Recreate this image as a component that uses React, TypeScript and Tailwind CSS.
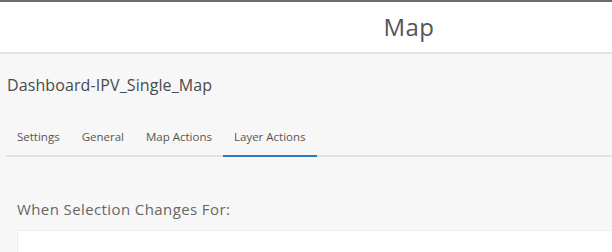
const tabs = ['Settings', 'General', 'Map Actions', 'Layer Actions'];

export default function App() {
  const active = 'Layer Actions';
  return (
    <div className="w-[612px] h-[252px] overflow-hidden bg-[#f7f7f7] font-['Open_Sans',sans-serif]">
      {/* header */}
      <div className="h-[54px] bg-white border-t-2 border-[#6b6b6b] border-b-2 border-b-[#e3e3e3] flex items-center justify-center pl-[206px]">
        <span className="text-[24px] tracking-[0.5px] text-[#555] leading-none">Map</span>
      </div>

      <div className="pl-[7px] pt-[23px]">
        <h1 className="text-[16px] tracking-[0.1px] text-[#4a4a4a] leading-none">Dashboard-IPV_Single_Map</h1>

        <div className="mt-[38px] -ml-[1px] flex border-b-2 border-[#e2e2e2]">
          {tabs.map((t) => (
            <div
              key={t}
              className={
                t === active
                  ? 'px-[11px] pb-[12px] text-[11.5px] leading-none text-[#555] border-b-2 border-[#2a7ac0] -mb-[2px]'
                  : 'px-[11px] pb-[12px] text-[11.5px] leading-none text-[#555]'
              }
            >
              {t}
            </div>
          ))}
        </div>

        <div className="pl-[10px] pt-[45px]">
          <p className="text-[15px] tracking-[0.4px] text-[#666] leading-none">When Selection Changes For:</p>
          <div className="mt-[13px] h-[40px] bg-white border border-[#ececec] mr-[-20px]" />
        </div>
      </div>
    </div>
  );
}
